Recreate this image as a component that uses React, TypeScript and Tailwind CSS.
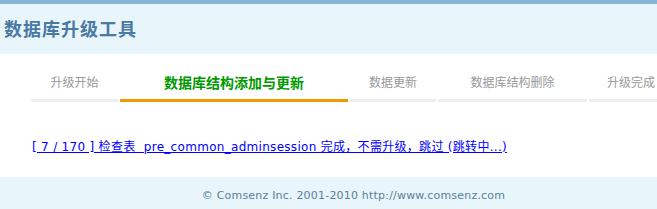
import React from "react";

const tabs = [
  { label: "升级开始", w: "w-[87px]", active: false },
  { label: "数据库结构添加与更新", w: "w-[228px]", active: true },
  { label: "数据更新", w: "w-[86px]", active: false },
  { label: "数据库结构删除", w: "w-[149px]", active: false },
  { label: "升级完成", w: "w-[84px]", active: false },
];

export default function App() {
  return (
    <div className="w-[657px] h-[209px] overflow-hidden bg-white flex flex-col" style={{ fontFamily: '"DejaVu Sans", "Noto Sans CJK SC", sans-serif' }}>
      <div className="h-[4px] bg-[#86b6d6]" />
      <div className="h-[50px] bg-[#e8f5fb] flex items-center pl-[4px] pb-[2px]">
        <h1 className="text-[18px] font-bold text-[#4a7aa3] tracking-[1px]" style={{ fontFamily: '"Noto Sans CJK SC", sans-serif' }}>
          数据库升级工具
        </h1>
      </div>
      <div className="flex pl-[31px] gap-[2px] mt-[16px] shrink-0 w-[720px]">
        {tabs.map((t) => (
          <div key={t.label} className={`${t.w} shrink-0 flex flex-col`}>
            <div
              className={`h-[29px] pb-[5px] flex items-center justify-center ${
                t.active ? "text-[14px] font-bold text-[#009900]" : "text-[12px] text-[#999999]"
              }`}
              style={{ fontFamily: '"Noto Sans CJK SC", sans-serif' }}
            >
              {t.label}
            </div>
            <div className={`h-[3px] ${t.active ? "bg-[#f39800]" : "bg-[#eeeeee]"}`} />
          </div>
        ))}
      </div>
      <div className="pl-[32px] mt-[32px] h-[43px]">
        <a href="#" className="text-[12px] text-[#0000ff] underline leading-[16px] whitespace-pre tracking-[0.3px]">
          {"[ 7 / 170 ] 检查表  pre_common_adminsession 完成，不需升级，跳过 (跳转中...)"}
        </a>
      </div>
      <div className="flex-1 bg-[#e8f5fb] flex items-center justify-center pl-[50px] pt-[6px]">
        <span className="text-[11px] text-[#5a7f99] tracking-[0.2px]">© Comsenz Inc. 2001-2010 http://www.comsenz.com</span>
      </div>
    </div>
  );
}
